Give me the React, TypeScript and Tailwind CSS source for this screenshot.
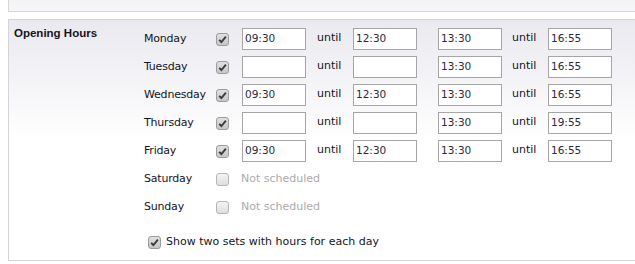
import React from 'react';

interface DayRow {
  day: string;
  enabled: boolean;
  from1: string;
  until1: string;
  from2: string;
  until2: string;
}

const days: DayRow[] = [
  { day: 'Monday', enabled: true, from1: '09:30', until1: '12:30', from2: '13:30', until2: '16:55' },
  { day: 'Tuesday', enabled: true, from1: '', until1: '', from2: '13:30', until2: '16:55' },
  { day: 'Wednesday', enabled: true, from1: '09:30', until1: '12:30', from2: '13:30', until2: '16:55' },
  { day: 'Thursday', enabled: true, from1: '', until1: '', from2: '13:30', until2: '19:55' },
  { day: 'Friday', enabled: true, from1: '09:30', until1: '12:30', from2: '13:30', until2: '16:55' },
  { day: 'Saturday', enabled: false, from1: '', until1: '', from2: '', until2: '' },
  { day: 'Sunday', enabled: false, from1: '', until1: '', from2: '', until2: '' },
];

const Check = ({ checked }: { checked: boolean }) => (
  <span
    className={`flex h-[13px] w-[13px] shrink-0 items-center justify-center rounded-[3px] border ${
      checked
        ? 'border-[#9c9c9c] bg-gradient-to-b from-[#e0e0e0] to-[#c6c6c6]'
        : 'border-[#b4b4b4] bg-gradient-to-b from-[#f4f4f4] to-[#dedede]'
    }`}
  >
    {checked && (
      <svg width="9" height="9" viewBox="0 0 9 9">
        <path d="M1.2 4.8 L3.4 7 L7.9 1.6" fill="none" stroke="#3c3c3c" strokeWidth="1.9" />
      </svg>
    )}
  </span>
);

const TimeBox = ({ value }: { value: string }) => (
  <div className="flex h-[22px] w-[64px] shrink-0 items-center border border-[#a6a6a6] bg-white pl-[2px] text-[10.5px] text-[#2a2a3a]">
    {value}
  </div>
);

export default function App() {
  return (
    <div className="h-[264px] w-[635px] overflow-hidden bg-white pl-2 text-[11px] text-[#14141e] [font-family:'DejaVu_Sans',sans-serif]">
      <div className="h-[12px] w-[640px] border-b border-l border-[#d6d6d9] bg-gradient-to-b from-[#f3f3f6] to-[#f7f7f9]" />

      <div className="mt-[7px] flex w-[640px] border border-[#d4d4d8] bg-gradient-to-b from-[#e9e9ef] via-[#f6f6f9] via-30% to-white to-50% pb-[10px] pt-[5px]">
        <div className="w-[135px] shrink-0 pl-[5px] pt-[1px] text-[11.5px] font-bold leading-[14px] [font-family:'Liberation_Sans',sans-serif]">
          Opening Hours
        </div>

        <div className="flex flex-col">
          {days.map((d) => (
            <div key={d.day} className="flex h-[28px] items-center">
              <span className="w-[72px] shrink-0 tracking-[-0.2px]">{d.day}</span>
              <Check checked={d.enabled} />
              {d.enabled ? (
                <>
                  <div className="ml-[13px]">
                    <TimeBox value={d.from1} />
                  </div>
                  <span className="ml-[11px] w-[36px] shrink-0 -translate-y-[1px]">until</span>
                  <TimeBox value={d.until1} />
                  <div className="ml-[21px]">
                    <TimeBox value={d.from2} />
                  </div>
                  <span className="ml-[10px] w-[36px] shrink-0 -translate-y-[1px]">until</span>
                  <TimeBox value={d.until2} />
                </>
              ) : (
                <span className="ml-[12px] text-[#ababab]">Not scheduled</span>
              )}
            </div>
          ))}

          <label className="ml-[4px] mt-[13px] flex h-[16px] items-center gap-[5px]">
            <Check checked={true} />
            <span>Show two sets with hours for each day</span>
          </label>
        </div>
      </div>
    </div>
  );
}
